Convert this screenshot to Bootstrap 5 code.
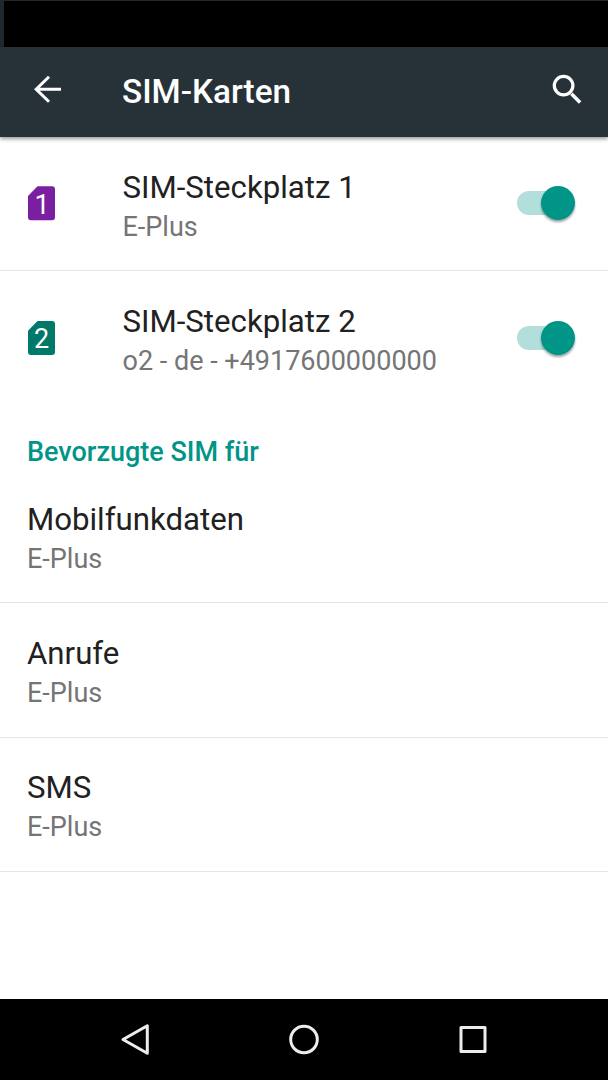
<!DOCTYPE html>
<html lang="de">
<head>
<meta charset="utf-8">
<meta name="viewport" content="width=device-width, initial-scale=1">
<title>SIM-Karten</title>
<link href="https://cdn.jsdelivr.net/npm/bootstrap@5.3.0/dist/css/bootstrap.min.css" rel="stylesheet">
<style>
body{font-family:Roboto,"Liberation Sans",sans-serif;background:#fff;color:#212121;height:1080px;overflow:hidden}
.status-area{height:47px;background:#1f282c;padding:1px 0 0 4px}
.status-area div{background:#000}
.app-bar{height:89.5px;background:#273238;box-shadow:0 2px 4px rgba(0,0,0,.4);padding:0 22px 0 27px;z-index:1}
.app-title{font-size:33.3px;font-weight:500;line-height:40px;margin:0;padding-left:54px}
.setting{height:134.3px;padding:6px 33px 0 27px;border:0;border-bottom:1px solid #e5e5e5;background:none;color:inherit}
.setting.slot{padding-top:7.5px}
.setting.last-slot{border-bottom-color:transparent}
.sim-slot{width:95.5px;margin-top:-3px}
.setting-name{font-size:31.2px;line-height:42px;margin-bottom:-2px}
.setting-value{font-size:27px;line-height:40px;color:#757575}
.section-name{font-size:27px;line-height:40px;font-weight:500;color:#009587;margin:0;height:64px;padding:27px 27px 0}
.switch-art{margin-top:-3px;margin-right:-5px}
.nav-keys{height:81px;background:#000}
svg{display:block}
svg text{font-family:Roboto,"Liberation Sans",sans-serif;font-size:27px;fill:#fff;text-anchor:middle}
</style>
</head>
<body class="d-flex flex-column">
<div class="status-area d-flex flex-shrink-0"><div class="flex-grow-1"></div></div>
<header class="app-bar d-flex align-items-center flex-shrink-0 text-white position-relative">
  <svg width="41" height="41" viewBox="0 0 41 41" fill="none" stroke="#fff" stroke-width="3"><path d="M34 18.3H9M22 5.8 9.2 18.3 22 30.8"/></svg>
  <h1 class="app-title flex-grow-1">SIM-Karten</h1>
  <svg width="41" height="41" viewBox="0 0 41 41" fill="none" stroke="#fff"><circle cx="18.6" cy="14.6" r="9.3" stroke-width="3.2"/><path d="m26.4 22.7 8.7 8.7" stroke-width="3.5"/></svg>
</header>
<main class="flex-grow-1">
  <div class="list-group list-group-flush">
    <div class="setting slot d-flex align-items-center">
      <div class="sim-slot"><svg width="29" height="38" viewBox="0 0 29 38"><path d="M10.5 .3H25a3 3 0 0 1 3 3v28a3 3 0 0 1-3 3H4a3 3 0 0 1-3-3V10Z" fill="#7b1fa2"/><text x="15" y="27.5">1</text></svg></div>
      <div class="flex-grow-1"><div class="setting-name">SIM-Steckplatz 1</div><div class="setting-value">E-Plus</div></div>
      <svg class="switch-art" width="64" height="44" viewBox="0 0 64 44"><use href="#switch-on"/></svg>
    </div>
    <div class="setting slot last-slot d-flex align-items-center">
      <div class="sim-slot"><svg width="29" height="38" viewBox="0 0 29 38"><path d="M10.5 0H25a3 3 0 0 1 3 3v28a3 3 0 0 1-3 3H4a3 3 0 0 1-3-3V9.7Z" fill="#00796b"/><text x="14.5" y="27">2</text></svg></div>
      <div class="flex-grow-1"><div class="setting-name">SIM-Steckplatz 2</div><div class="setting-value">o2 - de - +4917600000000</div></div>
      <svg class="switch-art" width="64" height="44" viewBox="0 0 64 44">
        <defs><filter id="knob-shadow" x="-30%" y="-30%" width="160%" height="160%"><feDropShadow dx="0" dy="2" stdDeviation="1.3" flood-color="#000" flood-opacity=".38"/></filter>
        <g id="switch-on"><rect x="1" y="8" width="50" height="24" rx="12" fill="#b2dfdb"/><circle cx="42" cy="20" r="17" fill="#009587" filter="url(#knob-shadow)"/></g></defs>
        <use href="#switch-on"/>
      </svg>
    </div>
  </div>
  <h2 class="section-name">Bevorzugte SIM für</h2>
  <div class="list-group list-group-flush">
    <div class="setting d-flex align-items-center"><div><div class="setting-name">Mobilfunkdaten</div><div class="setting-value">E-Plus</div></div></div>
    <div class="setting d-flex align-items-center"><div><div class="setting-name">Anrufe</div><div class="setting-value">E-Plus</div></div></div>
    <div class="setting d-flex align-items-center"><div><div class="setting-name">SMS</div><div class="setting-value">E-Plus</div></div></div>
  </div>
</main>
<nav class="nav-keys flex-shrink-0 d-flex justify-content-center align-items-center" aria-label="Navigation">
  <svg width="380" height="40" viewBox="0 0 380 40" fill="none" stroke="#eceeed" stroke-width="3" stroke-linejoin="round"><path d="M33.3 5.7v27.5L9 19.5Z"/><circle cx="190" cy="19.5" r="13.3"/><rect x="347" y="7.5" width="24" height="24"/></svg>
</nav>
<script src="https://cdn.jsdelivr.net/npm/bootstrap@5.3.0/dist/js/bootstrap.bundle.min.js"></script>
</body>
</html>
